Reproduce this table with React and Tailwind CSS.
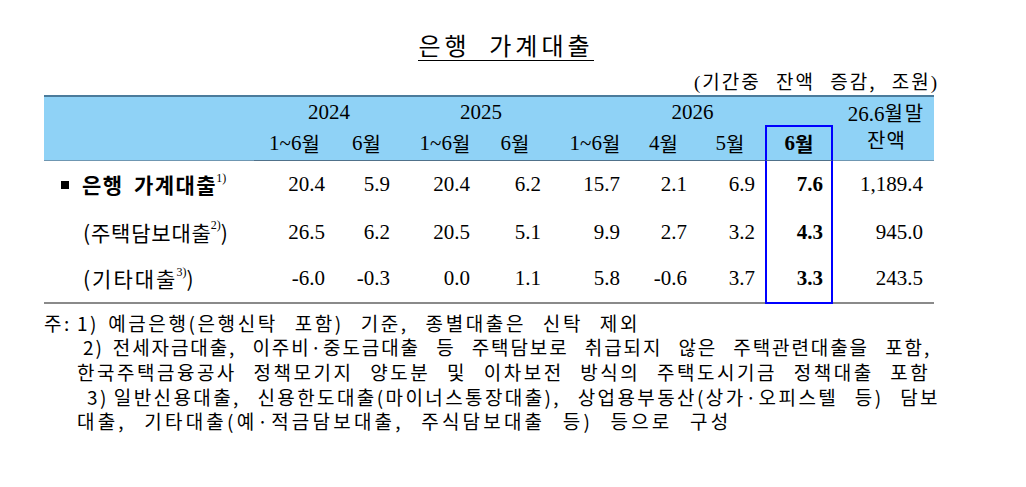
import React from "react";

const KR = { fontFamily: '"Noto Sans CJK KR", "Noto Sans", sans-serif' };
const SERIF = { fontFamily: '"Liberation Serif", "Noto Sans CJK KR", serif' };

const cols = "grid-cols-[210px_79px_67px_78px_74px_76px_67px_70px_68px_101px]";

const rows = [
  { label: "은행 가계대출", sup: "1)", bold: true, bullet: true, track: "tracking-[1.5px]", v: ["20.4", "5.9", "20.4", "6.2", "15.7", "2.1", "6.9", "7.6", "1,189.4"] },
  { label: "(주택담보대출", sup: "2)", close: ")", track: "tracking-[0.8px]", v: ["26.5", "6.2", "20.5", "5.1", "9.9", "2.7", "3.2", "4.3", "945.0"] },
  { label: "(기타대출", sup: "3)", close: ")", track: "tracking-[2px]", v: ["-6.0", "-0.3", "0.0", "1.1", "5.8", "-0.6", "3.7", "3.3", "243.5"] },
];

const pr = ["pr-[8px]", "pr-[10px]", "pr-[8px]", "pr-[11px]", "pr-[8px]", "pr-[8px]", "pr-[10px]", "pr-[8px]", "pr-[11px]"];

function Sup({ children }) {
  return (
    <span className="relative -top-[7px] text-[12px] -ml-[1px] tracking-[0px]" style={SERIF}>
      {children}
    </span>
  );
}

export default function App() {
  return (
    <div className="w-[1026px] h-[487px] bg-white text-black overflow-hidden pt-[30px] pl-[44px]">
      <div className="w-[890px]">
        {/* Title */}
        <div className="flex justify-center pl-[34px]">
          <span
            className="text-[24px] leading-[30px] tracking-[4px] border-b-[1.5px] border-black"
            style={KR}
          >
            은행&nbsp;&nbsp;가계대출
          </span>
        </div>
        {/* Unit */}
        <div className="flex justify-end mr-[-3px] mt-[8px] h-[26px] items-center">
          <span className="text-[19px] leading-[24px] tracking-[2px] [word-spacing:9px]" style={KR}>
            <span style={SERIF}>(</span>기간중 잔액 증감, 조원<span style={SERIF} className="tracking-[0px]">)</span>
          </span>
        </div>

        {/* Table */}
        <div className={`grid ${cols} border-t-2 border-[#4b7b9b]`} style={SERIF}>
          {/* header row 1 */}
          <div className="row-span-2 bg-[#8fd2f6] border-b border-[#6f97b2]" />
          <div className="col-span-2 bg-[#8fd2f6] h-[30px] flex flex-col">
            <div className="flex-1 flex items-center justify-center pl-[4px] text-[21px]">2024</div>
            <div className="h-[2px] bg-[#6a8fa6] ml-[4px]" />
          </div>
          <div className="col-span-2 bg-[#8fd2f6] h-[30px] flex flex-col">
            <div className="flex-1 flex items-center justify-center pl-[10px] text-[21px]">2025</div>
            <div className="h-[2px] bg-[#6a8fa6] ml-[10px] mr-[2px]" />
          </div>
          <div className="col-span-4 bg-[#8fd2f6] h-[30px] flex flex-col">
            <div className="flex-1 flex items-center justify-center text-[21px]">2026</div>
            <div className="h-[2px] bg-[#6a8fa6] ml-[10px] -mr-[10px]" />
          </div>
          <div className="row-span-2 bg-[#8fd2f6] border-b border-[#6f97b2] flex flex-col items-center justify-center pb-[4px] pl-[6px] text-[21px] leading-[26px]">
            <div>
              26.6<span style={KR} className="text-[20px] tracking-[2px]">월말</span>
            </div>
            <div style={KR} className="text-[20px] tracking-[1px]">잔액</div>
          </div>

          {/* header row 2 */}
          {[
            ["1~6", "pl-[2px]"],
            ["6", ""],
            ["1~6", "pl-[12px]"],
            ["6", ""],
            ["1~6", "pl-[10px]"],
            ["4", "pl-[4px]"],
            ["5", ""],
          ].map(([t, p], i) => (
            <div
              key={i}
              className={`bg-[#8fd2f6] h-[34px] border-b border-[#50718a] flex items-center justify-center text-[21px] ${p}`}
            >
              {t}
              <span style={KR} className="text-[20px]">월</span>
            </div>
          ))}
          <div className="bg-[#8fd2f6] h-[36px] -mt-[2px] border-b border-[#50718a] border-t-2 border-l-2 border-r-2 border-t-[#0000ff] border-l-[#0000ff] border-r-[#0000ff] flex items-center justify-center text-[21px] font-bold">
            6<span style={KR} className="text-[20px]">월</span>
          </div>

          {/* body */}
          {rows.map((r, ri) => (
            <React.Fragment key={ri}>
              <div className={`h-[47.6px] flex items-center ${ri === 2 ? "border-b-2 border-[#8a8a8a]" : ""}`}>
                {r.bullet ? (
                  <div className="w-[8px] h-[8px] bg-black ml-[17px] mr-[13px]" />
                ) : (
                  <div className="w-[39px]" />
                )}
                <span
                  className={`text-[21px] [word-spacing:4px] ${r.track} ${r.bold ? "font-bold" : ""}`}
                  style={KR}
                >
                  {r.label}
                </span>
                <Sup>{r.sup}</Sup>
                {r.close && <span className="text-[21px]" style={KR}>{r.close}</span>}
              </div>
              {r.v.map((v, vi) => (
                <div
                  key={vi}
                  className={`h-[47.6px] flex items-center justify-end text-[21px] ${pr[vi]} ${
                    vi === 7 ? "font-bold border-l-2 border-r-2 border-[#0000ff]" : ""
                  } ${ri === 2 ? (vi === 7 ? "border-b-2 border-b-[#0000ff]" : "border-b-2 border-[#8a8a8a]") : ""}`}
                >
                  {v}
                </div>
              ))}
            </React.Fragment>
          ))}
        </div>

        {/* Notes */}
        <div className="mt-[7px] text-[19px] leading-[24.6px] whitespace-nowrap [word-spacing:10px]" style={KR}>
          <div className="h-[24.6px] tracking-[2.6px]">
            주:<span className="ml-[5px]">1)</span><span className="ml-[9px]">예금은행(은행신탁 포함) 기준, 종별대출은 신탁 제외</span>
          </div>
          <div className="h-[24.6px] ml-[39px] tracking-[1.9px]">
            2)<span className="ml-[9px]">전세자금대출, 이주비·중도금대출 등 주택담보로 취급되지 않은 주택관련대출을 포함,</span>
          </div>
          <div className="h-[24.6px] ml-[33px] tracking-[2.5px]">한국주택금융공사 정책모기지 양도분 및 이차보전 방식의 주택도시기금 정책대출 포함</div>
          <div className="h-[24.6px] ml-[43px] tracking-[2.4px]">
            3)<span className="ml-[5px]">일반신용대출, 신용한도대출(마이너스통장대출), 상업용부동산(상가·오피스텔 등) 담보</span>
          </div>
          <div className="h-[24.6px] ml-[33px] tracking-[3.2px]">대출, 기타대출(예·적금담보대출, 주식담보대출 등) 등으로 구성</div>
        </div>
      </div>
    </div>
  );
}
